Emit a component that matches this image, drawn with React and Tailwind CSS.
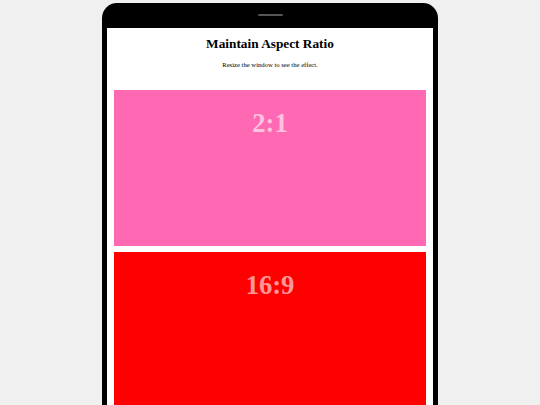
export default function App() {
  return (
    <div className="h-[405px] w-full overflow-hidden bg-[#f0f0f0] pt-[3px]">
      {/* tablet frame */}
      <div className="mx-auto flex h-[440px] w-[336px] flex-col rounded-t-[15px] bg-black px-[5px]">
        <div className="flex h-[25px] justify-center pt-[11px]">
          <div className="h-[2px] w-[25px] rounded-full bg-[#555]" />
        </div>
        <div className="flex-1 bg-white px-[7px] pt-[8px] text-center font-['Liberation_Serif',serif] text-black">
          <h1 className="text-[13.3px] font-bold leading-[15px]">Maintain Aspect Ratio</h1>
          <p className="mt-[9.5px] text-[6.65px] leading-[8px]">Resize the window to see the effect.</p>

          <div className="mt-[21.5px] flex flex-col gap-[6px]">
            <div className="aspect-[2/1] w-full bg-[#ff69b4] pt-[18px]">
              <h2 className="text-[26.6px] font-bold leading-[30px] text-white/60">2:1</h2>
            </div>
            <div className="aspect-[16/9] w-full bg-[#ff0000] pt-[18px]">
              <h2 className="text-[26.6px] font-bold leading-[30px] text-white/60">16:9</h2>
            </div>
          </div>
        </div>
      </div>
    </div>
  );
}
